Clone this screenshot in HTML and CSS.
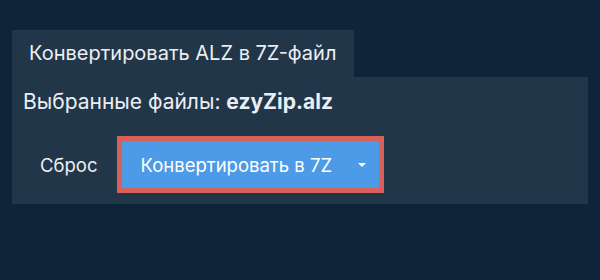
FILE: index.html
```html
<!DOCTYPE html>
<html lang="ru">
<head>
  <meta charset="UTF-8">
  <title>Конвертировать ALZ в 7Z-файл</title>
  <link rel="stylesheet" href="styles.css">
</head>
<body>
  <div class="converter">
    <div class="tab">Конвертировать ALZ в 7Z-файл</div>
    <div class="panel">
      <div class="files">Выбранные файлы: <b>ezyZip.alz</b></div>
      <div class="actions">
        <button class="reset-btn">Сброс</button>
        <button class="convert-btn">
          <span>Конвертировать в 7Z</span>
          <span class="caret"></span>
        </button>
      </div>
    </div>
  </div>
</body>
</html>
```

FILE: styles.css
```css
body {
  margin: 0;
  padding: 30px 12px;
  background: #0f2339;
  font-family: Inter, Roboto, sans-serif;
  color: #eceff2;
}
.tab {
  display: inline-block;
  background: #22364a;
  height: 47px;
  line-height: 47px;
  padding: 0 18px 0 17px;
  font-size: 20px;
}
.panel {
  background: #22364a;
  padding: 10px 8px 11px;
}
.files {
  font-size: 21px;
  line-height: 30px;
  padding-left: 3px;
}
.files b {
  font-weight: 700;
}
.actions {
  display: flex;
  align-items: center;
  margin-top: 19px;
}
.reset-btn {
  background: none;
  border: none;
  color: #eceff2;
  font-family: inherit;
  font-size: 18.5px;
  padding: 0 20px;
  cursor: pointer;
}
.convert-btn {
  display: flex;
  align-items: center;
  justify-content: space-between;
  width: 267px;
  height: 57px;
  background: #4d9be6;
  border: 5px solid #d9605a;
  color: #fff;
  font-family: inherit;
  font-size: 18.5px;
  padding: 0 13px 0 18px;
  cursor: pointer;
}
.caret {
  width: 0;
  height: 0;
  border-left: 4px solid transparent;
  border-right: 4px solid transparent;
  border-top: 4px solid #fff;
}
```
